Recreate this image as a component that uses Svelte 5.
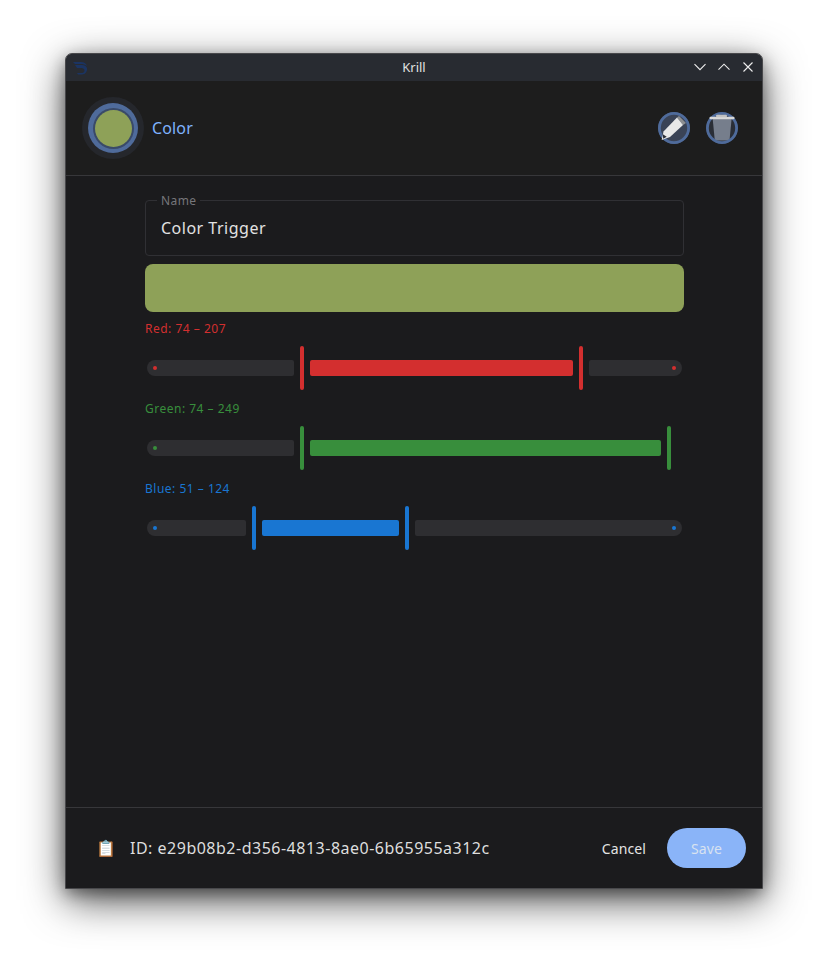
<script lang="ts">
  const sliders = [
    { label: "Red: 74 – 207", color: "#d32f2f", lead: 147, span: 263, tail: true },
    { label: "Green: 74 – 249", color: "#388e3c", lead: 147, span: 351, tail: false },
    { label: "Blue: 51 – 124", color: "#1976d2", lead: 99, span: 137, tail: true }
  ];
</script>

<div class="page">
  <div class="window">
    <header class="titlebar">
      <svg class="app-icon" viewBox="0 0 16 14" width="16" height="14">
        <path d="M1 1h8c3 0 5 1.500 6 4-2-1.500-4-2-6-2H3zM3 4h7c2.500 0 4 1 5 3 .5 2-.5 4-2 5.500-1 .8-2.500 1-4 1H6l-1-1.500h5c1.500 0 2.500-1 2.500-2.500S11 7 9.500 7H5z" fill="#1b3462" />
      </svg>
      <span class="title">Krill</span>
      <div class="win-btns">
        <svg viewBox="0 0 12 12" width="12" height="12"><path d="M.5 3.200 6 8.700l5.500-5.500" /></svg>
        <svg viewBox="0 0 12 12" width="12" height="12"><path d="M.5 8.700 6 3.200l5.500 5.500" /></svg>
        <svg viewBox="0 0 12 12" width="12" height="12"><path d="M1.500 1.500l9 9M10.500 1.500l-9 9" /></svg>
      </div>
    </header>

    <div class="head">
      <div class="node">
        <div class="halo">
          <div class="ring"><div class="swatch-dot"></div></div>
        </div>
        <span class="node-name">Color</span>
      </div>
      <div class="actions">
        <svg viewBox="0 0 32 32" width="32" height="32">
          <circle cx="16" cy="16" r="16" fill="#3a4356" />
          <circle cx="16" cy="16" r="14.600" fill="none" stroke="#4f6b9b" stroke-width="2.800" />
          <path d="M19 5.500l2-1.500 7 7-3 2z" fill="#8d8f92" />
          <path d="M5.500 19.500 19 5.500l6 7.500-13 12-8.300 3z" fill="#e8e8e8" />
          <path d="M4.500 22l4.200 2.700-3.400 2z" fill="#2a2d35" />
        </svg>
        <svg viewBox="0 0 32 32" width="32" height="32">
          <circle cx="16" cy="16" r="16" fill="#2a2e36" />
          <path d="M6.700 7h18.900L23.500 28.500H8.800z" fill="#767e8c" />
          <circle cx="16" cy="16" r="14.600" fill="none" stroke="#4f6b9b" stroke-width="2.800" />
          <rect x="3.500" y="4.800" width="25" height="2.500" rx="1" fill="#d8d8d8" />
          <rect x="10" y="2.800" width="11" height="2.400" rx="1" fill="#c2c2c2" />
        </svg>
      </div>
    </div>

    <main class="content">
      <div class="field">
        <span class="legend">Name</span>
        <span class="value">Color Trigger</span>
      </div>

      <div class="preview"></div>

      {#each sliders as s}
        <div class="group" style="--c:{s.color}">
          <div class="range-label">{s.label}</div>
          <div class="slider">
            <div class="track end-l" style="width:{s.lead}px"><i class="dot"></i></div>
            <div class="thumb"></div>
            <div class="active" style="width:{s.span}px"></div>
            <div class="thumb"></div>
            {#if s.tail}
              <div class="track end-r"><i class="dot"></i></div>
            {/if}
          </div>
        </div>
      {/each}
    </main>

    <footer class="foot">
      <span class="clip">📋</span>
      <span class="id">ID: e29b08b2-d356-4813-8ae0-6b65955a312c</span>
      <button class="cancel" type="button">Cancel</button>
      <button class="save" type="button">Save</button>
    </footer>
  </div>
</div>

<style>
  :global(body) { margin: 0; background: #fff; }
  .page { width: 828px; height: 966px; padding: 54px 66px 78px; box-sizing: border-box; font-family: "Noto Sans", sans-serif; }
  .window {
    height: 834px; display: flex; flex-direction: column; background: #1b1b1d;
    border-radius: 6px 6px 0 0; outline: 1px solid #48484b;
    box-shadow: 0 12px 42px rgba(0, 0, 0, 0.7), 0 5px 16px rgba(0, 0, 0, 0.4);
  }
  .titlebar { height: 27px; background: #282b31; display: flex; align-items: center; position: relative; border-radius: 6px 6px 0 0; padding: 0 8px 0 6px; }
  .title { position: absolute; left: 0; right: 0; top: 5px; line-height: 16px; text-align: center; color: #e0e0e0; font-size: 13px; }
  .win-btns { margin-left: auto; margin-top: -1px; display: flex; gap: 12px; position: relative; }
  .win-btns path { fill: none; stroke: #eee; stroke-width: 1.1; }
  .head { height: 94px; display: flex; align-items: center; justify-content: space-between; padding: 0 24px 0 16px; border-bottom: 1px solid #37373a; background: #1d1d1d; }
  .node { display: flex; align-items: center; gap: 8px; }
  .halo { width: 62px; height: 62px; border-radius: 50%; background: #25272c; display: flex; align-items: center; justify-content: center; }
  .ring { width: 50px; height: 50px; border-radius: 50%; background: #4f6b9b; display: flex; align-items: center; justify-content: center; }
  .swatch-dot { width: 37px; height: 37px; border-radius: 50%; background: #8ea158; box-shadow: 0 0 0 2px #3a4a68; }
  .node-name { color: #7fb3ff; font-size: 16px; letter-spacing: 0.15px; }
  .actions { display: flex; gap: 16px; }
  .actions svg { display: block; }
  .content { flex: 1; padding: 24px 78px 0 79px; }
  .field { height: 56px; box-sizing: border-box; padding: 0 15px; border: 1px solid #303034; border-radius: 4px; display: flex; align-items: center; position: relative; }
  .legend { position: absolute; left: 11px; top: -8px; padding: 0 4px; background: #1b1b1d; font-size: 12px; line-height: 16px; color: #76767a; letter-spacing: 0.4px; }
  .value { color: #e2e2e2; font-size: 16px; letter-spacing: 0.5px; }
  .preview { height: 48px; margin: 8px 0; background: #8ea158; border-radius: 8px; }
  .group { margin-bottom: 10px; }
  .range-label { font-size: 12px; line-height: 16px; padding-top: 1px; letter-spacing: 0.5px; color: var(--c); }
  .slider { height: 44px; margin-top: 9px; display: flex; align-items: center; gap: 6px; padding: 0 2px; }
  .track { height: 16px; background: #2e2e31; position: relative; }
  .end-l { border-radius: 8px 2px 2px 8px; }
  .end-r { flex: 1; border-radius: 2px 8px 8px 2px; }
  .active { height: 16px; background: var(--c); border-radius: 2px; }
  .thumb { width: 4px; height: 44px; background: var(--c); border-radius: 2px; }
  .dot { position: absolute; width: 4px; height: 4px; border-radius: 50%; background: var(--c); top: 6px; left: 6px; }
  .end-r .dot { left: auto; right: 6px; }
  .foot { height: 80px; border-top: 1px solid #37373a; display: flex; align-items: center; padding: 0 16px 0 30px; }
  .clip { font-size: 16px; width: 34px; font-family: "Noto Color Emoji", "Noto Sans", sans-serif; }
  .id { color: #dedede; font-size: 16px; letter-spacing: 0.5px; flex: 1; }
  button { border: 0; font-family: inherit; font-size: 14px; letter-spacing: 0.1px; background: none; }
  .cancel { color: #e4e4e4; margin-right: 21px; padding: 0; }
  .save { width: 79px; height: 40px; border-radius: 20px; background: #8ab4f8; color: #d8e2f0; }
</style>
